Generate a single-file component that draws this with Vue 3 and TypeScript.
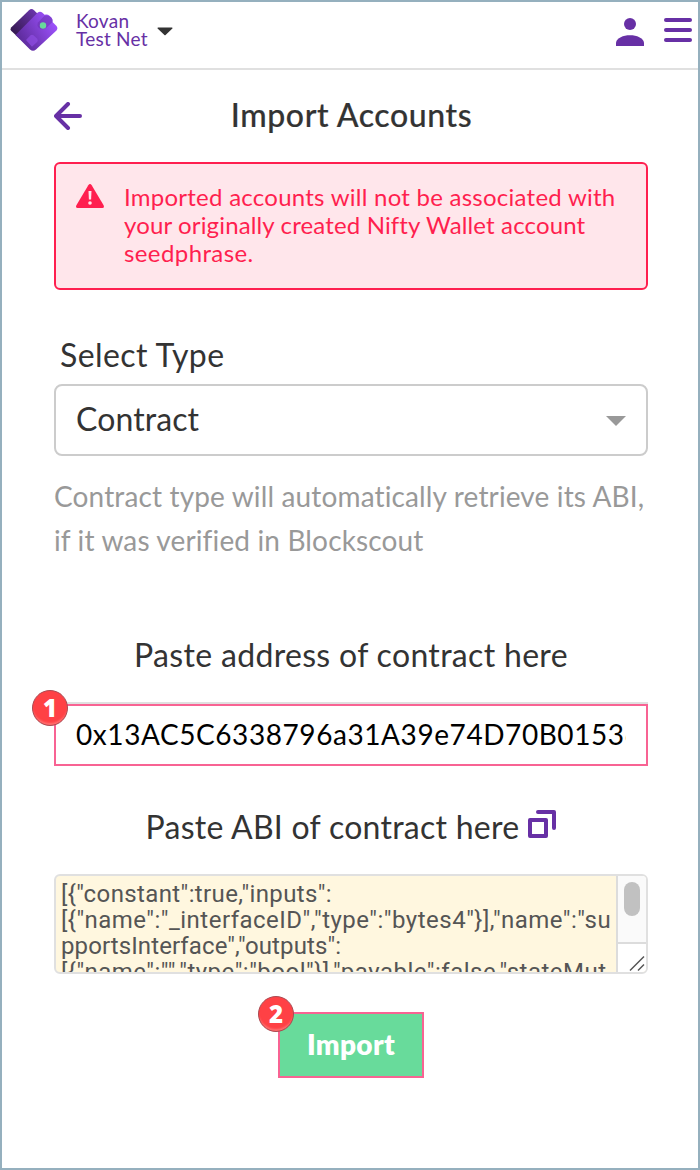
<script setup lang="ts">
import { ref } from 'vue'

const networkLines: string[] = ['Kovan', 'Test Net']
const warningLines: string[] = [
  'Imported accounts will not be associated with',
  'your originally created Nifty Wallet account',
  'seedphrase.',
]
const hintLines: string[] = [
  'Contract type will automatically retrieve its ABI,',
  'if it was verified in Blockscout',
]
const abiLines: string[] = [
  '[{"constant":true,"inputs":',
  '[{"name":"_interfaceID","type":"bytes4"}],"name":"su',
  'pportsInterface","outputs":',
  '[{"name":"","type":"bool"}],"payable":false,"stateMut',
]
const address = ref('0x13AC5C6338796a31A39e74D70B01536')
</script>

<template>
  <div class="window">
    <header class="topbar">
      <svg class="logo" width="48" height="44" viewBox="0 0 48 44">
        <defs>
          <linearGradient id="back" gradientUnits="userSpaceOnUse" x1="4" y1="26" x2="27" y2="4">
            <stop offset="0" stop-color="#34194f" />
            <stop offset="1" stop-color="#6b35ad" />
          </linearGradient>
          <linearGradient id="front" gradientUnits="userSpaceOnUse" x1="10" y1="34" x2="42" y2="14">
            <stop offset="0" stop-color="#5b2a99" />
            <stop offset="1" stop-color="#9a50f8" />
          </linearGradient>
        </defs>
        <path d="M1.400 19.200 19 2.200Q21.500 0 24 2.200L30 8 10 31 1.400 23Q-.2 21.200 1.400 19.200Z" fill="url(#back)" />
        <path d="M5.500 27 27.500 4.800Q30 2.600 32.500 4.800L34.500 6.700Q37.500 5.800 39.500 7.800L41.500 9.800Q43 11.500 42.500 14L46.500 18Q48.300 20.300 46.500 22.500L26 41.500Q23 44.200 20 41.500Z" fill="url(#front)" />
        <path d="M28 14.500 34.500 7.700Q38.500 6.500 41.500 9.800 43 11.500 42.500 14L36 20Q32.500 22.500 29 20 26.500 17.500 28 14.500Z" fill="#6630aa" opacity=".5" />
        <path d="m16 32 4.500-4.800q1.500-1 3 0l3.800 3.600q1 1.500 0 3l-5.300 5Z" fill="#8d4ce0" opacity=".75" />
        <circle cx="33" cy="17.500" r="3.200" fill="#68d99b" />
      </svg>
      <div class="network">
        <span v-for="line in networkLines" :key="line">{{ line }}</span>
      </div>
      <svg class="caret" width="16" height="9" viewBox="0 0 16 9">
        <path d="M1 0.500h14q1 .3.400 1L8.600 8q-.6.600-1.200 0L.6 1.500Q0 .8 1 .5Z" fill="#333" />
      </svg>
      <div class="actions">
        <svg width="28" height="28" viewBox="0 0 28 28" fill="#6730a5">
          <circle cx="14" cy="6" r="6" />
          <path d="M0 28v-3.500C1 20 7 17.300 14 17.300S27 20 28 24.500V28Z" />
        </svg>
        <svg width="28" height="24" viewBox="0 0 28 24" fill="#6730a5">
          <rect width="28" height="4" rx="2" />
          <rect y="10" width="28" height="4" rx="2" />
          <rect y="20" width="28" height="4" rx="2" />
        </svg>
      </div>
    </header>

    <main class="content">
      <div class="title-row">
        <svg width="28" height="28" viewBox="0 0 28 28" fill="none" stroke="#6730a5" stroke-width="4" stroke-linecap="round" stroke-linejoin="round">
          <path d="M14 2 2 14l12 12M2.500 14H26" />
        </svg>
        <h1>Import Accounts</h1>
      </div>

      <section class="warning">
        <svg width="28" height="24" viewBox="0 0 28 24">
          <path d="M12.300 1.200Q14-1.200 15.700 1.200L27.600 21.300Q28.600 23.700 26.500 24H1.500Q-.6 23.700.4 21.300Z" fill="#ff1f4f" />
          <path d="M12.500 7h3l-.4 8.500h-2.200Z" fill="#ffe5eb" />
          <circle cx="14" cy="19" r="1.800" fill="#ffe5eb" />
        </svg>
        <p><span v-for="(line, i) in warningLines" :key="i" :class="'w' + i">{{ line }}</span></p>
      </section>

      <label class="type-label">Select Type</label>
      <div class="select">
        <span>Contract</span>
        <svg width="20" height="10" viewBox="0 0 20 10"><path d="M0 0h20L10 10Z" fill="#999" /></svg>
      </div>
      <p class="hint"><span v-for="(line, i) in hintLines" :key="i">{{ line }}</span></p>

      <h2 class="address-label"><span>Paste address of contract here</span></h2>
      <div class="address-box">
        <input v-model="address" type="text" spellcheck="false" />
        <i class="badge badge-input">1</i>
      </div>

      <h2 class="abi-label">
        <span>Paste ABI of contract here</span>
        <svg width="28" height="28" viewBox="0 0 28 28" fill="none" stroke="#6730a5" stroke-width="4" stroke-linejoin="round" stroke-linecap="round">
          <path d="M2 10h16v16H2ZM10 2h16v16" />
        </svg>
      </h2>
      <div class="abi-box">
        <pre class="abi-text"><span v-for="(line, i) in abiLines" :key="i" :class="'a' + i">{{ line }}</span></pre>
        <div class="scroll">
          <div class="track"><div class="thumb"></div></div>
          <svg class="grip" width="29" height="28" viewBox="0 0 29 28" fill="none" stroke="#555" stroke-width="1.500">
            <path d="M12 26.500 26 12.500M20 26.500l6-6" />
          </svg>
        </div>
      </div>

      <div class="submit">
        <button type="button">Import</button>
        <i class="badge badge-button">2</i>
      </div>
    </main>
  </div>
</template>

<style>
body {
  margin: 0;
}
</style>

<style scoped>
* {
  box-sizing: border-box;
}

.window {
  width: 700px;
  height: 1170px;
  border: 2px solid #95b0be;
  background: #fff;
  color: #333;
  font-family: Lato, "Liberation Sans", sans-serif;
  overflow: hidden;
}

.topbar {
  display: flex;
  height: 68px;
  padding: 0 6px 0 8px;
  border-bottom: 2px solid #e0e0e0;
}

.logo {
  margin-top: 6px;
}

.network {
  display: flex;
  flex-direction: column;
  width: 73px;
  margin: 10px 0 0 18px;
  color: #6730a5;
  font-size: 19px;
  line-height: 18px;
  letter-spacing: 0.25px;
  white-space: nowrap;
}

.caret {
  margin: 25px 0 0 8px;
}

.actions {
  display: flex;
  gap: 20px;
  margin: 16px 0 0 auto;
}

.content {
  padding: 0 50px 0 52px;
}

.title-row {
  display: flex;
  height: 92px;
  padding-top: 32px;
}

h1,
h2,
p,
pre {
  margin: 0;
}

h1 {
  flex: 1;
  margin-top: -7px;
  padding-right: 27px;
  font-size: 32px;
  line-height: 40px;
  font-weight: 500;
  text-align: center;
  letter-spacing: 0.6px;
  -webkit-text-stroke: 0.2px #333;
}

.warning {
  display: flex;
  gap: 20px;
  height: 128px;
  padding: 20px;
  border: 2px solid #ff1f4f;
  border-radius: 6px;
  background: #ffe6eb;
  color: #ff1f4f;
}

.warning p {
  margin-top: -1px;
  font-size: 24px;
  line-height: 28px;
  letter-spacing: 0.4px;
}

.warning .w0 {
  letter-spacing: 0.25px;
}

.warning .w1 {
  letter-spacing: 0.14px;
}

.warning span,
.hint span,
.abi-text span {
  display: block;
  width: max-content;
  white-space: pre;
}

.type-label {
  display: block;
  height: 94px;
  padding: 45px 0 0 6px;
  font-size: 32px;
  line-height: 40px;
  letter-spacing: 0.4px;
}

.select {
  display: flex;
  align-items: center;
  justify-content: space-between;
  height: 72px;
  padding: 0 20px;
  border: 2px solid #ccc;
  border-radius: 8px;
  font-size: 32px;
  letter-spacing: 0.1px;
}

.select span {
  margin-top: -4px;
}

.select svg {
  margin-top: 2px;
}

.hint {
  height: 180px;
  padding-top: 18px;
  color: #999;
  font-size: 28px;
  line-height: 44px;
  letter-spacing: 0.14px;
}

h2 {
  display: flex;
  justify-content: center;
  font-size: 32px;
  line-height: 40px;
  font-weight: 400;
  letter-spacing: 0.32px;
}

.address-label {
  height: 66px;
}

.address-label span {
  margin-top: -1px;
}

.address-box {
  position: relative;
  height: 64px;
  border-top: 2px solid #e0e0e0;
}

input {
  display: block;
  width: 594px;
  height: 62px;
  padding: 0 20px 2px;
  border: 2px solid #f86393;
  border-radius: 0;
  outline: none;
  background: #fff;
  color: #000;
  font-family: inherit;
  font-size: 28px;
  letter-spacing: 0.57px;
}

.badge {
  position: absolute;
  width: 36px;
  height: 36px;
  border: 1px solid #a94b53;
  border-radius: 50%;
  background: #ff4145;
  box-shadow: inset 0 -3px 2px -1px #ff7070;
  color: #fff;
  font: 800 24px/34px "Open Sans", "Noto Sans", sans-serif;
  text-align: center;
}

.badge-input {
  top: -14px;
  left: -22px;
}

.badge-button {
  top: -16px;
  left: -20px;
}

.abi-label {
  height: 108px;
  padding-top: 41px;
  gap: 9px;
  letter-spacing: 0.26px;
}

.abi-label svg {
  margin-top: 3px;
}

.abi-box {
  display: flex;
  height: 100px;
  border: 2px solid #e0e0e0;
  border-radius: 6px;
  background: #fff7df;
  overflow: hidden;
}

.abi-text {
  width: 560px;
  padding: 5px 0 0 5px;
  overflow: hidden;
  color: #555;
  font-family: Roboto, sans-serif;
  font-size: 24px;
  line-height: 26px;
}

.a0 {
  letter-spacing: 0.38px;
}

.a1 {
  letter-spacing: 0.49px;
}

.a2 {
  letter-spacing: 0.1px;
}

.a3 {
  letter-spacing: 0.5px;
}

.scroll {
  width: 30px;
  border-left: 2px solid #dcdcdc;
  background: #fff;
}

.track {
  height: 68px;
  padding: 6px;
  border-bottom: 2px solid #dcdcdc;
  background: #fafafa;
}

.thumb {
  width: 16px;
  height: 34px;
  border-radius: 8px;
  background: #c1c1c1;
}

.grip {
  display: block;
}

.submit {
  position: relative;
  width: 146px;
  margin: 38px 0 0 224px;
}

button {
  display: block;
  width: 146px;
  height: 66px;
  padding: 0 0 3px;
  border: 2px solid #f86393;
  background: #68db9b;
  color: #fff;
  font-family: inherit;
  font-size: 28px;
  font-weight: 800;
  letter-spacing: 0.3px;
}
</style>
